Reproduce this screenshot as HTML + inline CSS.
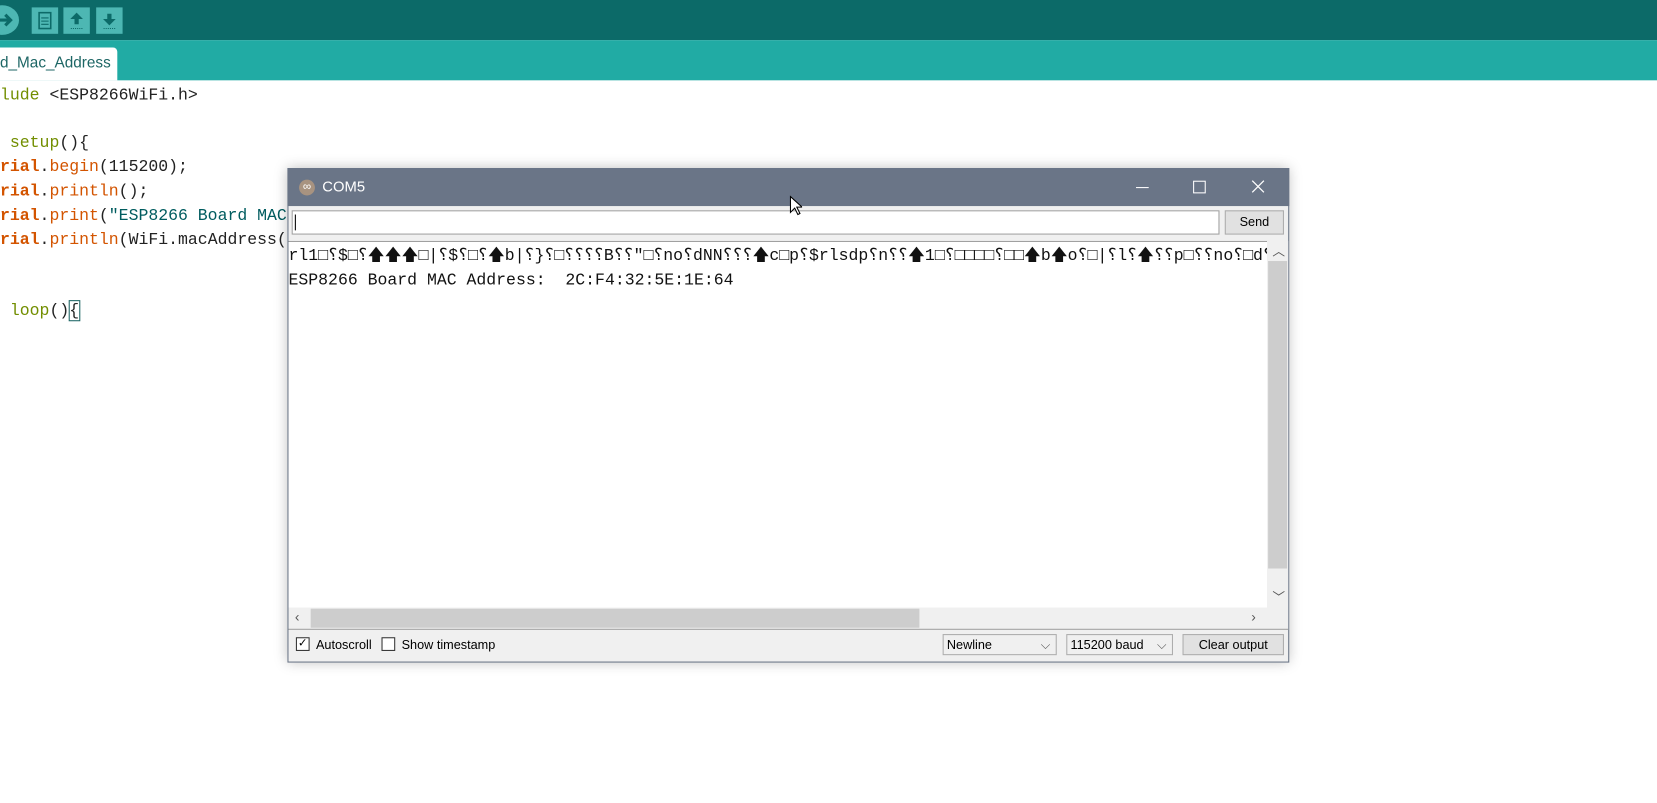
<!DOCTYPE html>
<html><head><meta charset="utf-8"><style>
html,body{margin:0;padding:0;width:1657px;height:803px;overflow:hidden;background:#fff}
#s{position:absolute;left:0;top:0;width:1568px;height:760px;transform:scale(1.05676);transform-origin:0 0;font-family:"Liberation Sans",sans-serif}
.a{position:absolute}
.mono{font-family:"Liberation Mono",monospace;font-size:15.6px;white-space:pre}
.code div{position:absolute;left:0;height:23px;line-height:23px}
.k{color:#d35400;font-weight:bold}.f{color:#d35400}.s{color:#005c5f}.g{color:#728e00}
.tb{position:absolute;top:7px;width:25px;height:25px;background:#4db7b3}
</style></head><body><div id="s">
<div class="a" style="left:0;top:0;width:1568px;height:38px;background:#0c6a68"></div>
<div class="a" style="left:-14px;top:5px;width:32px;height:28px;border-radius:50%;background:#4db7b3"></div>
<svg class="a" style="left:0;top:10px" width="16" height="18"><path d="M0 9h9M5 4l5 5-5 5" stroke="#0c6a68" stroke-width="3" fill="none"/></svg>
<div class="tb" style="left:30px"><svg width="25" height="25"><rect x="7" y="5" width="11" height="15" fill="none" stroke="#0c6a68" stroke-width="1.5"/><path d="M9 10h7M9 13h7M9 16h7" stroke="#0c6a68"/></svg></div>
<div class="tb" style="left:60px"><svg width="25" height="25"><path d="M12.5 5l6 6h-4v5h-4v-5h-4z" fill="#0c6a68"/><path d="M7 20h11" stroke="#0c6a68" stroke-dasharray="1 1"/></svg></div>
<div class="tb" style="left:91px"><svg width="25" height="25"><path d="M12.5 17l6-6h-4V6h-4v5h-4z" fill="#0c6a68"/><path d="M7 20h11" stroke="#0c6a68" stroke-dasharray="1 1"/></svg></div>
<div class="a" style="left:0;top:38px;width:1568px;height:38px;background:#21aba4"></div>
<div class="a" style="left:0;top:45px;width:111px;height:31px;background:#fff;border-radius:0 4px 0 0;font-size:14.5px;line-height:30px;color:#1d6665">d_Mac_Address</div>
<div class="mono code" style="position:absolute;left:0;top:79px;color:#222">
<div style="top:0"><span class="g">lude</span> &lt;ESP8266WiFi.h&gt;</div>
<div style="top:45px"> <span class="g">setup</span>(){</div>
<div style="top:68px"><span class="k">rial</span>.<span class="f">begin</span>(115200);</div>
<div style="top:91px"><span class="k">rial</span>.<span class="f">println</span>();</div>
<div style="top:114px"><span class="k">rial</span>.<span class="f">print</span>(<span class="s">"ESP8266 Board MAC</span></div>
<div style="top:137px"><span class="k">rial</span>.<span class="f">println</span>(WiFi.macAddress(</div>
<div style="top:204px"> <span class="g">loop</span>()<span style="outline:1px solid #1d6665">{</span></div>
</div>
<div class="a" style="left:272px;top:159px;width:948px;height:468px;background:#f0f0f0;border:1px solid #6a7587;box-sizing:border-box;box-shadow:0 0 12px rgba(0,0,0,.25)"></div>
<div class="a" style="left:272px;top:159px;width:948px;height:36px;background:#6a7587"></div>
<div class="a" style="left:283px;top:170px;width:15px;height:15px;border-radius:50%;background:#a89380;color:#fff;font-size:11px;line-height:14px;text-align:center">∞</div>
<div class="a" style="left:305px;top:168px;color:#fff;font-size:14px">COM5</div>
<div class="a" style="left:1075px;top:177px;width:12px;height:1px;background:#fff"></div>
<div class="a" style="left:1129px;top:171px;width:10px;height:10px;border:1px solid #fff"></div>
<svg class="a" style="left:1184px;top:170px" width="13" height="13"><path d="M1 1l11 11M12 1L1 12" stroke="#fff" stroke-width="1.2"/></svg>
<div class="a" style="left:276px;top:199px;width:878px;height:23px;background:#fff;border:1px solid #a0a0a0;box-sizing:border-box"></div>
<div class="a" style="left:279px;top:203px;width:1px;height:15px;background:#000"></div>
<div class="a" style="left:1159px;top:199px;width:56px;height:23px;background:#e1e1e1;border:1px solid #adadad;box-sizing:border-box;font-size:12px;line-height:21px;text-align:center">Send</div>
<div class="a" style="left:273px;top:228px;width:926px;height:347px;background:#fff;border-top:1px solid #a0a0a0;box-sizing:border-box"></div>
<div class="a mono" style="left:273px;top:231px;width:926px;overflow:hidden;line-height:23px;color:#111">rl1□؟□؟$؟|□🡅🡅🡅؟□$؟🡅b|؟؟؟؟□؟{؟B؟□"؟؟no؟dNN؟؟؟🡅c□p؟$rlsdp؟n؟□□□□؟□1🡅؟؟□□🡅b🡅o؟|□؟l؟؟🡅؟p□؟؟no؟□d؟؟l`□؟□2c
ESP8266 Board MAC Address:  2C:F4:32:5E:1E:64</div>
<div class="a" style="left:1199px;top:228px;width:20px;height:347px;background:#f0f0f0"></div>
<div class="a" style="left:1200px;top:247px;width:18px;height:291px;background:#cdcdcd"></div>
<div class="a" style="left:1204px;top:229px;font-size:12px;color:#555">︿</div>
<div class="a" style="left:1204px;top:556px;font-size:12px;color:#555">﹀</div>
<div class="a" style="left:273px;top:575px;width:946px;height:20px;background:#f0f0f0;border-bottom:1px solid #a0a0a0"></div>
<div class="a" style="left:294px;top:576px;width:576px;height:18px;background:#cdcdcd"></div>
<div class="a" style="left:279px;top:576px;font-size:13px;color:#555">‹</div>
<div class="a" style="left:1184px;top:576px;font-size:13px;color:#555">›</div>
<div class="a" style="left:280px;top:603px;width:13px;height:13px;border:1px solid #333;background:#fff;box-sizing:border-box;font-size:11px;line-height:11px;text-align:center">✓</div>
<div class="a" style="left:299px;top:603px;font-size:12px">Autoscroll</div>
<div class="a" style="left:361px;top:603px;width:13px;height:13px;border:1px solid #333;background:#fff;box-sizing:border-box"></div>
<div class="a" style="left:380px;top:603px;font-size:12px">Show timestamp</div>
<div class="a" style="left:892px;top:600px;width:108px;height:20px;border:1px solid #adadad;background:#f0f0f0;box-sizing:border-box;font-size:12px;line-height:18px;padding-left:3px">Newline<span style="position:absolute;right:5px;color:#555">⌵</span></div>
<div class="a" style="left:1009px;top:600px;width:101px;height:20px;border:1px solid #adadad;background:#f0f0f0;box-sizing:border-box;font-size:12px;line-height:18px;padding-left:3px">115200 baud<span style="position:absolute;right:5px;color:#555">⌵</span></div>
<div class="a" style="left:1119px;top:600px;width:96px;height:20px;border:1px solid #adadad;background:#e1e1e1;box-sizing:border-box;font-size:12px;line-height:18px;text-align:center">Clear output</div>
<svg class="a" style="left:747px;top:185px" width="12" height="20"><path d="M1 1v15l4-4 3 6 2-1-3-6h5z" fill="#fff" stroke="#000"/></svg>
</div></body></html>
